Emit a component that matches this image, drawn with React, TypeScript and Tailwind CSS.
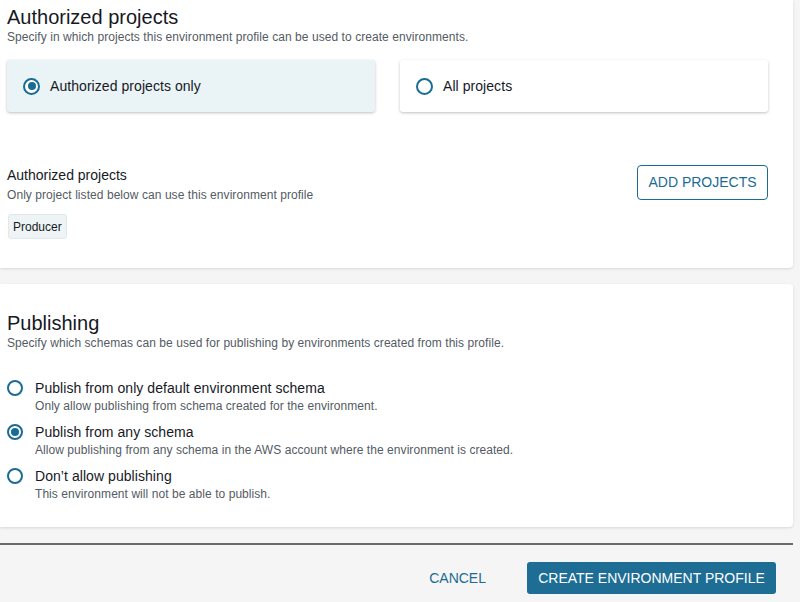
import { useState } from 'react';

const BLUE = 'text-[#1a6c94]';

function Radio({ checked, size = 16 }: { checked: boolean; size?: number }) {
  return (
    <span
      className="flex shrink-0 items-center justify-center rounded-full border-2 border-[#1a6c94] bg-white"
      style={{ width: size, height: size }}
    >
      {checked && <span className="h-[8px] w-[8px] rounded-full bg-[#1a6c94]" />}
    </span>
  );
}

const publishOptions = [
  {
    id: 'default',
    label: 'Publish from only default environment schema',
    hint: 'Only allow publishing from schema created for the environment.',
  },
  {
    id: 'any',
    label: 'Publish from any schema',
    hint: 'Allow publishing from any schema in the AWS account where the environment is created.',
  },
  {
    id: 'none',
    label: 'Don\u2019t allow publishing',
    hint: 'This environment will not be able to publish.',
  },
];

export default function App() {
  const [scope, setScope] = useState<'authorized' | 'all'>('authorized');
  const [publish, setPublish] = useState('any');

  return (
    <div className="h-[602px] w-[800px] overflow-hidden bg-[#f5f5f5] font-['Liberation_Sans',Arial,sans-serif] text-[#16191f]">
      {/* Authorized projects card */}
      <section className="w-[793px] rounded-br-[4px] bg-white pb-[29px] pl-[7px] pr-[25px] pt-[5px] shadow-[0_1px_3px_rgba(0,0,0,0.12)]">
        <h2 className="text-[20px] leading-[24px]">Authorized projects</h2>
        <p className="text-[12px] leading-[16px] tracking-[0.06px] text-[#545b64]">
          Specify in which projects this environment profile can be used to create environments.
        </p>

        <div className="mt-[15px] grid grid-cols-2 gap-[25px]">
          <button
            type="button"
            onClick={() => setScope('authorized')}
            className={`flex h-[52px] items-center gap-[10px] rounded-[3px] pl-[16px] text-left text-[14px] tracking-[0.06px] shadow-[0_1px_3px_rgba(0,0,0,0.25)] ${
              scope === 'authorized' ? 'bg-[#eaf3f5]' : 'bg-white'
            }`}
          >
            <Radio checked={scope === 'authorized'} size={17} />
            Authorized projects only
          </button>
          <button
            type="button"
            onClick={() => setScope('all')}
            className={`flex h-[52px] items-center gap-[10px] rounded-[3px] pl-[16px] text-left text-[14px] tracking-[0.06px] shadow-[0_1px_3px_rgba(0,0,0,0.25)] ${
              scope === 'all' ? 'bg-[#eaf3f5]' : 'bg-white'
            }`}
          >
            <Radio checked={scope === 'all'} size={17} />
            All projects
          </button>
        </div>

        <div className="mt-[53px] flex items-start justify-between">
          <div>
            <h3 className="pt-[1px] text-[14px] leading-[18px]">Authorized projects</h3>
            <p className="mt-[3px] text-[12px] leading-[16px] tracking-[0.06px] text-[#545b64]">
              Only project listed below can use this environment profile
            </p>
            <span className="mt-[11px] ml-[1px] inline-flex h-[25px] items-center rounded-[3px] border border-[#e1e8ea] bg-[#eef4f5] px-[4px] text-[12px]">
              Producer
            </span>
          </div>
          <button
            type="button"
            className={`h-[35px] w-[131px] rounded-[4px] border border-[#1a6c94] bg-white text-[14px] uppercase ${BLUE}`}
          >
            Add projects
          </button>
        </div>
      </section>

      {/* Publishing card */}
      <section className="mt-[16px] w-[793px] rounded-r-[4px] bg-white pb-[25px] pl-[7px] pt-[27px] shadow-[0_1px_3px_rgba(0,0,0,0.12)]">
        <h2 className="text-[20px] leading-[24px]">Publishing</h2>
        <p className="text-[12px] leading-[16px] tracking-[0.06px] text-[#545b64]">
          Specify which schemas can be used for publishing by environments created from this profile.
        </p>

        <div className="mt-[28px] flex flex-col gap-[9px]">
          {publishOptions.map((o) => (
            <label key={o.id} className="flex cursor-pointer items-start gap-[12px]" onClick={() => setPublish(o.id)}>
              <span className="pt-[1px]">
                <Radio checked={publish === o.id} />
              </span>
              <span>
                <span className="block text-[14px] leading-[18px] tracking-[0.06px]">{o.label}</span>
                <span className="mt-[1px] block text-[12px] leading-[16px] tracking-[0.06px] text-[#545b64]">
                  {o.hint}
                </span>
              </span>
            </label>
          ))}
        </div>
      </section>

      <div className="mt-[16px] h-[2px] w-[793px] bg-[#6b6b6b]" />

      <div className="mt-[17px] flex items-center justify-end gap-[25px] pr-[24px]">
        <button type="button" className={`h-[32px] px-[16px] text-[14px] uppercase ${BLUE}`}>
          Cancel
        </button>
        <button
          type="button"
          className="h-[32px] w-[249px] rounded-[3px] bg-[#1d6d95] text-[14px] uppercase text-white"
        >
          Create environment profile
        </button>
      </div>
    </div>
  );
}
